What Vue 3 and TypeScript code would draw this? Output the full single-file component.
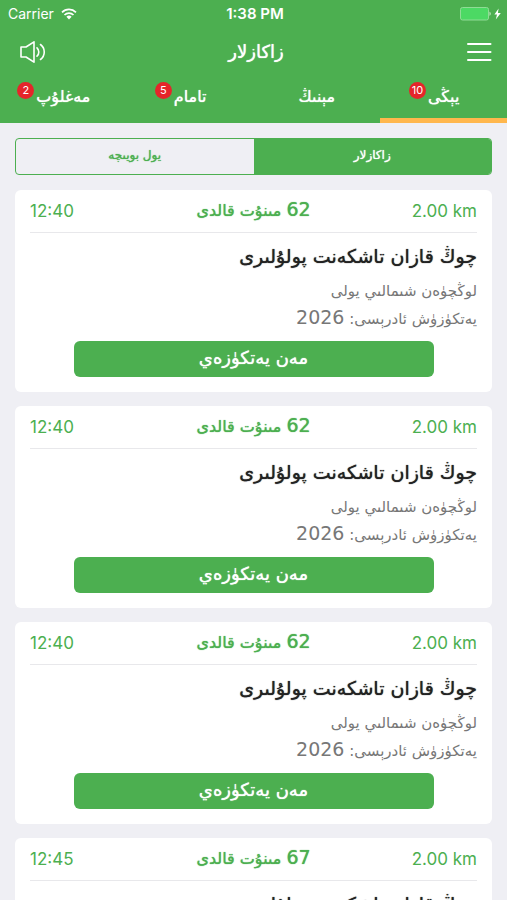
<script setup lang="ts">
import { ref } from 'vue'

interface Tab {
  id: string
  label: string
  count?: number
}

interface Order {
  id: number
  time: string
  minutes: number
  distance: string
  shop: string
  street: string
  address: string
}

const tabs: Tab[] = [
  { id: 'new', label: 'يېڭى', count: 10 },
  { id: 'mine', label: 'مېنىڭ' },
  { id: 'done', label: 'تامام', count: 5 },
  { id: 'failed', label: 'مەغلۇپ', count: 2 },
]

const segments = [
  { id: 'orders', label: 'زاكازلار' },
  { id: 'route', label: 'يول بويىچە' },
]

const times: [string, number][] = [
  ['12:40', 62],
  ['12:40', 62],
  ['12:40', 62],
  ['12:45', 67],
]

const orders: Order[] = times.map(([time, minutes], id) => ({
  id,
  time,
  minutes,
  distance: '2.00 km',
  shop: 'چوڭ قازان تاشكەنت پولۇلىرى',
  street: 'لوڭچۈەن شىمالىي يولى',
  address: '2026',
}))

const activeTab = ref('new')
const activeSegment = ref('orders')
</script>

<template>
  <div class="app" dir="rtl" lang="ug">
    <header class="top">
      <div class="status" dir="ltr">
        <div class="carrier">
          <span>Carrier</span>
          <svg width="16" height="12" viewBox="0 0 16 12" aria-hidden="true">
            <g fill="none" stroke="#fff" stroke-width="1.7">
              <path d="M1 4.3a10 10 0 0 1 14 0" />
              <path d="M3.500 7a6.400 6.400 0 0 1 9 0" />
            </g>
            <path d="M5.400 8.800a3.700 3.700 0 0 1 5.200 0L8 11.500z" fill="#fff" />
          </svg>
        </div>
        <span class="clock">1:38 PM</span>
        <div class="power">
          <svg width="42" height="14" viewBox="0 0 42 14" aria-hidden="true">
            <rect x="0.5" y="0.5" width="28" height="12.5" rx="2" fill="#4cd964" stroke="#8fdc95" />
            <path d="M29.500 4.800c1.600.3 1.600 3.600 0 3.900z" fill="#c9f0cc" />
            <path d="M38.600 1.500 34.400 7.600h2.600L35.800 12.500l5-6.500h-2.900z" fill="#fff" />
          </svg>
        </div>
      </div>

      <div class="bar" dir="ltr">
        <button class="icon" type="button" aria-label="Sound">
          <svg width="26" height="24" viewBox="0 0 26 24" fill="none" stroke="#fff" stroke-width="1.6" stroke-linejoin="round" stroke-linecap="round">
            <path d="M1 7h5L14 1.800v20.400L6 17H1z" />
            <path d="M17 7.800c2.400 2.300 2.400 6.200 0 8.400" />
            <path d="M20.500 4.500c5 3.800 5 11.200 0 15" />
          </svg>
        </button>
        <h1 class="title">زاكازلار</h1>
        <button class="icon" type="button" aria-label="Menu">
          <svg width="26" height="20" viewBox="0 0 26 20" stroke="#fff" stroke-width="2" stroke-linecap="round">
            <path d="M2 2h22.500M2 10h22.500M2 18h22.500" />
          </svg>
        </button>
      </div>

      <nav class="tabs">
        <button
          v-for="tab in tabs"
          :key="tab.id"
          type="button"
          class="tab"
          :class="{ active: tab.id === activeTab }"
          @click="activeTab = tab.id"
        >
          <span class="tab-label">
            {{ tab.label }}
            <span v-if="tab.count" class="badge">{{ tab.count }}</span>
          </span>
        </button>
      </nav>
    </header>

    <main class="content">
      <div class="segments">
        <button
          v-for="segment in segments"
          :key="segment.id"
          type="button"
          class="segment"
          :class="{ active: segment.id === activeSegment }"
          @click="activeSegment = segment.id"
        >
          {{ segment.label }}
        </button>
      </div>

      <article v-for="order in orders" :key="order.id" class="card">
        <div class="card-head">
          <span class="distance" dir="ltr">{{ order.distance }}</span>
          <span class="remaining"><span class="number">{{ order.minutes }}</span> مىنۇت قالدى</span>
          <span class="time" dir="ltr">{{ order.time }}</span>
        </div>
        <h2 class="shop">{{ order.shop }}</h2>
        <p class="line">{{ order.street }}</p>
        <p class="line">يەتكۈزۈش ئادرېسى: <span class="number">{{ order.address }}</span></p>
        <button class="deliver" type="button">مەن يەتكۈزەي</button>
      </article>
    </main>
  </div>
</template>

<style>
body {
  margin: 0;
  background: #efeff4;
}
</style>

<style scoped>
.app {
  display: flex;
  flex-direction: column;
  height: 100vh;
  background: #efeff4;
  font-family: 'DejaVu Sans', sans-serif;
}

button {
  margin: 0;
  padding: 0;
  border: 0;
  background: none;
  color: inherit;
  font: inherit;
  cursor: pointer;
}

svg {
  display: block;
}

/* The regular face with a soft edge reads as a medium weight. */
.title,
.tab,
.segment,
.remaining,
.shop,
.deliver {
  font-weight: 400;
  text-shadow: 0 0 1px currentColor;
}

.top {
  flex: none;
  background: #4caf50;
  color: #fff;
}

.status {
  display: grid;
  grid-template-columns: 1fr auto 1fr;
  align-items: center;
  height: 27px;
  padding: 0 5px 0 8px;
  font-family: Inter, sans-serif;
  font-size: 14px;
}

.carrier {
  display: flex;
  align-items: center;
  gap: 7px;
}

.clock {
  font-size: 15px;
  font-weight: 600;
}

.power {
  justify-self: end;
}

.bar {
  display: flex;
  align-items: center;
  justify-content: space-between;
  height: 50px;
  padding: 0 15px 0 20px;
}

.title {
  margin: 0;
  font-size: 18px;
  line-height: 24px;
}

.tabs {
  display: flex;
  height: 46px;
}

.tab {
  flex: 1;
  box-sizing: border-box;
  padding-bottom: 2px;
  border-bottom: 5px solid transparent;
  font-size: 16px;
  line-height: 24px;
}

.tab.active {
  border-bottom-color: #ffb74d;
}

.tab-label {
  position: relative;
  display: inline-block;
}

.badge {
  position: absolute;
  top: -3px;
  left: -19px;
  width: 17px;
  height: 17px;
  border-radius: 50%;
  background: #e5252a;
  font-family: Inter, sans-serif;
  font-size: 11px;
  line-height: 17px;
  text-align: center;
  text-shadow: none;
}

.content {
  flex: 1;
  min-height: 0;
  display: flex;
  flex-direction: column;
  gap: 14px;
  padding: 15px 15px 0;
  overflow-y: auto;
  scrollbar-width: none;
}

.segments {
  flex: none;
  display: flex;
  box-sizing: border-box;
  height: 37px;
  margin-bottom: 1px;
  border: 1px solid #4caf50;
  border-radius: 4px;
  overflow: hidden;
}

.segment {
  flex: 1;
  padding-bottom: 4px;
  color: #4caf50;
  font-size: 12px;
}

.segment.active {
  background: #4caf50;
  color: #fff;
}

.card {
  flex: none;
  display: flex;
  flex-direction: column;
  padding: 0 15px 15px;
  border-radius: 6px;
  background: #fff;
}

.card-head {
  display: grid;
  grid-template-columns: 1fr auto 1fr;
  align-items: center;
  height: 42px;
  border-bottom: 1px solid #e8e8eb;
  color: #4caf50;
  font-size: 16px;
}

.distance,
.time {
  font-family: Inter, sans-serif;
  font-size: 17px;
}

.distance {
  justify-self: start;
}

.time {
  justify-self: end;
}

.remaining {
  line-height: 24px;
}

.number {
  font-size: 19px;
  line-height: 20px;
}

.shop {
  margin: 8px 0 6px;
  color: #222;
  font-size: 19px;
  line-height: 30px;
}

.line {
  margin: 0;
  color: #777;
  font-size: 15px;
  line-height: 28px;
}

.deliver {
  align-self: center;
  width: 360px;
  max-width: 100%;
  height: 36px;
  margin-top: 8px;
  padding-bottom: 4px;
  border-radius: 6px;
  background: #4caf50;
  color: #fff;
  font-size: 18px;
}
</style>
